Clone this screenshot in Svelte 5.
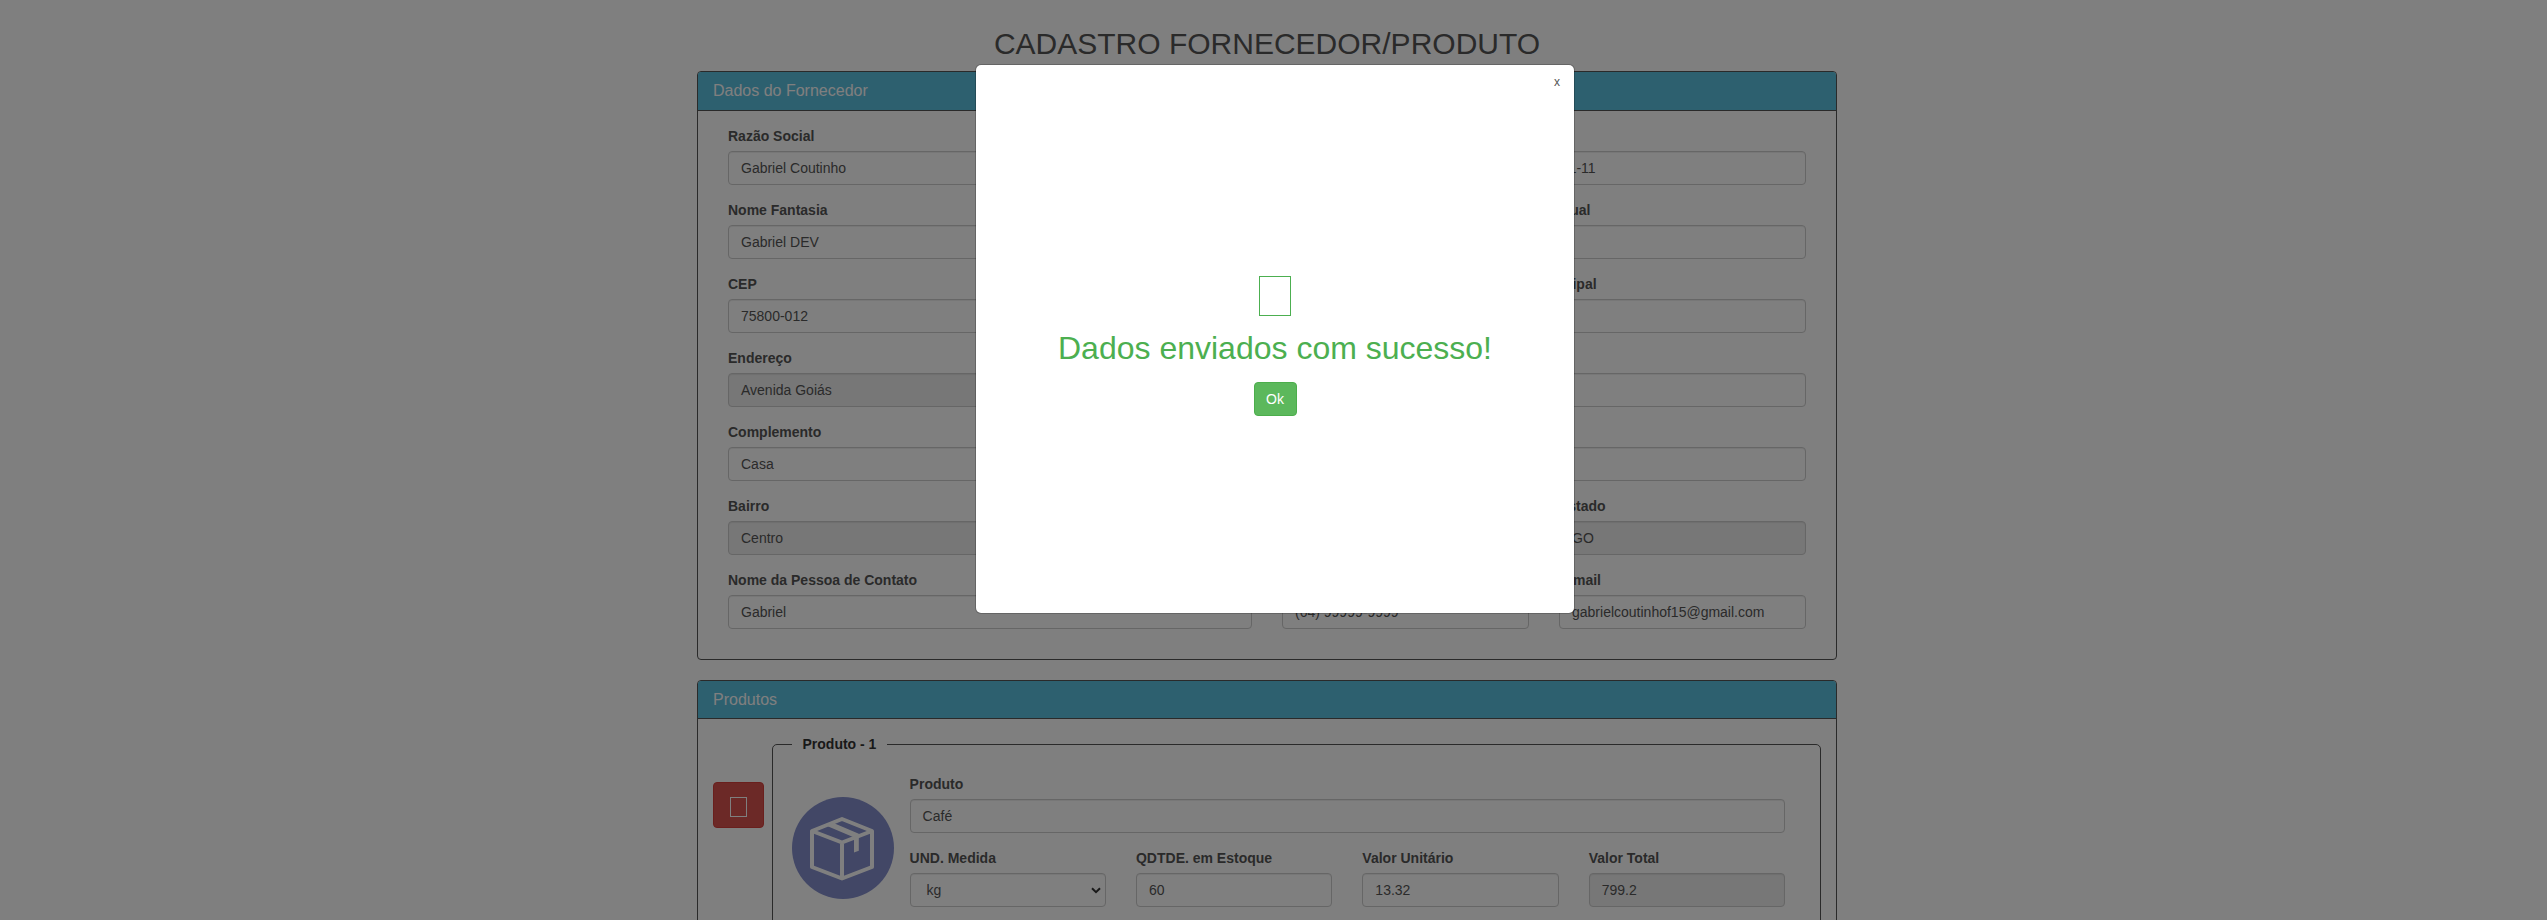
<script>
  const supplierRows = [
    [
      { label: 'Razão Social', value: 'Gabriel Coutinho', span: 8 },
      { label: '', value: '11.111.111/1111-11', span: 4 }
    ],
    [
      { label: 'Nome Fantasia', value: 'Gabriel DEV', span: 8 },
      { label: 'Inscrição Estadual', value: '', span: 4 }
    ],
    [
      { label: 'CEP', value: '75800-012', span: 8 },
      { label: 'Inscrição Municipal', value: '', span: 4 }
    ],
    [
      { label: 'Endereço', value: 'Avenida Goiás', span: 8, readonly: true },
      { label: '', value: '', span: 4 }
    ],
    [
      { label: 'Complemento', value: 'Casa', span: 8 },
      { label: '', value: '', span: 4 }
    ],
    [
      { label: 'Bairro', value: 'Centro', span: 6, readonly: true },
      { label: '', value: '', span: 3, readonly: true },
      { label: 'Estado', value: 'GO', span: 3, readonly: true }
    ],
    [
      { label: 'Nome da Pessoa de Contato', value: 'Gabriel', span: 6 },
      { label: '', value: '(64) 99999-9999', span: 3 },
      { label: 'E-mail', value: 'gabrielcoutinhof15@gmail.com', span: 3 }
    ]
  ];

  const productRows = [
    [{ label: 'Produto', value: 'Café', span: 12 }],
    [
      { label: 'UND. Medida', value: 'kg', span: 3, select: true },
      { label: 'QDTDE. em Estoque', value: '60', span: 3 },
      { label: 'Valor Unitário', value: '13.32', span: 3 },
      { label: 'Valor Total', value: '799.2', span: 3, readonly: true }
    ]
  ];
</script>

{#snippet fieldRows(rows)}
  {#each rows as row}
    <div class="row">
      {#each row as field}
        <div class="field" style="grid-column: span {field.span}">
          <div class="label">{field.label}</div>
          <div class="control" class:readonly={field.readonly} class:select={field.select}>
            <span>{field.value}</span>
            {#if field.select}
              <svg width="10" height="7" viewBox="0 0 10 7"><path d="M1 1.2 5 5.2 9 1.2" fill="none" stroke="#333" stroke-width="2" /></svg>
            {/if}
          </div>
        </div>
      {/each}
    </div>
  {/each}
{/snippet}

<div class="page">
  <main class="container">
    <h2>CADASTRO FORNECEDOR/PRODUTO</h2>

    <section class="panel">
      <h3>Dados do Fornecedor</h3>
      <div class="body">{@render fieldRows(supplierRows)}</div>
    </section>

    <section class="panel">
      <h3>Produtos</h3>
      <div class="body products">
        <button class="remove" aria-label="Remover"><i></i></button>
        <fieldset>
          <legend>Produto - 1</legend>
          <div class="product">
            <svg class="picture" width="102" height="102" viewBox="0 0 102 102">
              <circle cx="51" cy="51" r="51" fill="#848ecc" />
              <g fill="none" stroke="#fff" stroke-width="4" stroke-linejoin="round">
                <path d="M50 22 80 34V70L50 81.5 20 70V34Z" />
                <path d="M20 34 50 45.5 80 34M50 46V82" />
              </g>
              <path d="M34.5 28.8 41.5 26 66.8 36.8V53.7L62 55.6V41.5L61 40Z" fill="#fff" />
            </svg>
            <div class="details">{@render fieldRows(productRows)}</div>
          </div>
        </fieldset>
      </div>
    </section>
  </main>

  <div class="overlay">
    <div class="modal">
      <span class="close">x</span>
      <i class="mark"></i>
      <p>Dados enviados com sucesso!</p>
      <button class="ok">Ok</button>
    </div>
  </div>
</div>

<style>
  :global(body) {
    margin: 0;
    background: #fff;
  }
  .page, .page * {
    box-sizing: border-box;
  }
  .page {
    position: relative;
    height: 920px;
    overflow: hidden;
    padding: 27px 13px 0 0;
    font: 14px/20px "Liberation Sans", Arial, sans-serif;
    color: #555;
  }
  .container {
    width: 1140px;
    margin: 0 auto;
  }
  h2 {
    margin: 0 0 11px;
    font-size: 30px;
    font-weight: 400;
    line-height: 33px;
    text-align: center;
  }
  .panel {
    margin-bottom: 20px;
    border: 1px solid #555;
    border-radius: 4px;
    overflow: hidden;
  }
  h3 {
    margin: 0;
    padding: 10px 15px;
    border-bottom: 1px solid #555;
    background: #5bc0de;
    color: #fff;
    font-size: 16px;
    font-weight: 400;
    line-height: 17.6px;
  }
  .body {
    padding: 15px;
  }
  .row {
    display: grid;
    grid-template-columns: repeat(12, 1fr);
    margin-bottom: 15px;
  }
  .field {
    padding: 0 15px;
    min-width: 0;
  }
  .label {
    height: 20px;
    margin-bottom: 5px;
    font-weight: 700;
    white-space: nowrap;
  }
  .control {
    display: flex;
    align-items: center;
    justify-content: space-between;
    height: 34px;
    padding: 0 12px;
    border: 1px solid #ccc;
    border-radius: 4px;
    background: #fff;
    box-shadow: inset 0 1px 1px rgba(0, 0, 0, 0.075);
    white-space: nowrap;
  }
  .readonly {
    background: #eee;
  }
  .select {
    padding: 0 4px 0 16px;
  }
  .products {
    display: flex;
    align-items: flex-start;
    gap: 8px;
    height: 260px;
  }
  .remove {
    display: flex;
    align-items: center;
    justify-content: center;
    flex: none;
    width: 51px;
    height: 46px;
    margin-top: 48px;
    padding: 3px 0 0;
    border: 1px solid #d43f3a;
    border-radius: 4px;
    background: #d9534f;
  }
  .remove i {
    width: 17px;
    height: 20px;
    border: 1px solid #fff;
  }
  fieldset {
    flex: 1;
    min-width: 0;
    height: 300px;
    margin: 0;
    padding: 0 19px;
    border: 1px solid #555;
    border-radius: 5px;
  }
  legend {
    padding: 0 10.5px;
    color: #333;
    font-weight: 700;
  }
  .product {
    display: flex;
    align-items: flex-start;
    margin-top: 20px;
  }
  .picture {
    flex: none;
    margin-top: 23px;
  }
  .details {
    flex: none;
    width: 905.5px;
    margin-left: 0.6px;
  }
  .overlay {
    position: absolute;
    inset: 0;
    display: flex;
    justify-content: center;
    align-items: flex-start;
    padding: 64px 0 0 3px;
    background: rgba(0, 0, 0, 0.5);
  }
  .modal {
    position: relative;
    display: flex;
    flex-direction: column;
    align-items: center;
    width: 600px;
    height: 550px;
    padding-top: 211px;
    border: 1px solid rgba(0, 0, 0, 0.2);
    border-radius: 6px;
    background: #fff;
    background-clip: padding-box;
  }
  .close {
    position: absolute;
    top: 7px;
    right: 14px;
    font-size: 12px;
  }
  .mark {
    width: 32px;
    height: 40px;
    border: 1px solid #4caf50;
  }
  p {
    margin: 13px 0 15px;
    color: #4caf50;
    font-size: 32px;
    line-height: 38px;
    white-space: nowrap;
  }
  .ok {
    width: 43px;
    height: 34px;
    padding: 0;
    border: 1px solid #4cae4c;
    border-radius: 4px;
    background: #5cb85c;
    color: #fff;
    font: inherit;
  }
</style>
